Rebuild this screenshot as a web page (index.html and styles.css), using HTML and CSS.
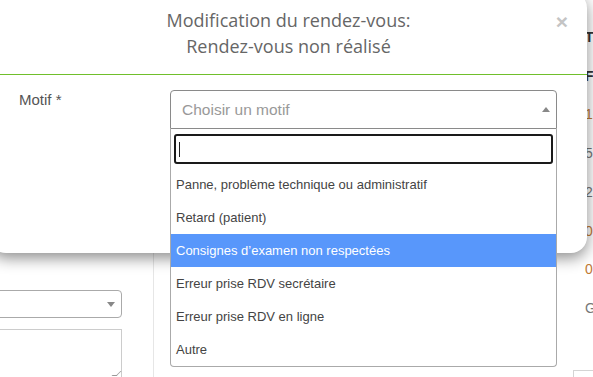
FILE: index.html
```html
<!DOCTYPE HTML>
<html>
<head>
	<title>Modification du rendez-vous</title>
<meta name="viewport" content="width=device-width, initial-scale=1">
<link rel="stylesheet" href="styles.css">
</head>
<body>
<div class="page">
	<div class="page-left">
		<div class="bg-select"><span class="caret-down"></span></div>
		<div class="bg-textarea"><span class="grip"></span></div>
	</div>
	<div class="page-mid"></div>
	<div class="page-right">
		<span class="strong">T</span>
		<span class="strong">F</span>
		<span class="num">1</span>
		<span class="num dim">5</span>
		<span class="num dim">2</span>
		<span class="num">0</span>
		<span class="num">0</span>
		<span class="dim">G</span>
		<span class="mini-box"></span>
	</div>
</div>

<div class="modal">
	<div class="modal-header">
		<span class="close">&times;</span>
		<h4>Modification du rendez-vous:<br>Rendez-vous non réalisé</h4>
	</div>
	<div class="modal-body">
		<label class="label">Motif *</label>
		<div class="field">
			<div class="select open">
				<span class="placeholder">Choisir un motif</span>
				<span class="caret-up"></span>
			</div>
			<div class="dropdown">
				<div class="search"><span class="cursor"></span></div>
				<ul class="options">
					<li>Panne, problème technique ou administratif</li>
					<li>Retard (patient)</li>
					<li class="active">Consignes d’examen non respectées</li>
					<li>Erreur prise RDV secrétaire</li>
					<li>Erreur prise RDV en ligne</li>
					<li>Autre</li>
				</ul>
			</div>
		</div>
	</div>
</div>
</body>
</html>
```

FILE: styles.css
```css
*{ box-sizing:border-box; }
html,body{
	margin:0;
	padding:0;
}
body{
	font-family:"Liberation Sans",Arial,sans-serif;
	background:#fff;
	width:593px;
	height:377px;
	overflow:hidden;
	position:relative;
}

/* page behind the modal */
.page{
	display:grid;
	grid-template-columns:154px 430px 9px;
	height:377px;
}
.page-left{
	border-right:1px solid #e6e6e6;
	padding-top:290px;
}
.bg-select{
	margin-left:-10px;
	width:132px;
	height:28px;
	border:1px solid #aaa;
	border-radius:4px;
	display:flex;
	align-items:center;
	justify-content:flex-end;
	padding-right:6px;
}
.caret-down{
	border-top:5px solid #888;
	border-left:4px solid transparent;
	border-right:4px solid transparent;
}
.bg-textarea{
	margin-left:-10px;
	margin-top:11px;
	width:132px;
	height:60px;
	border:1px solid #ccc;
	display:flex;
	align-items:flex-end;
	justify-content:flex-end;
	padding:0 2px 12px 0;
}
.grip{
	width:5px;
	height:5px;
	border-right:1px solid #999;
	border-bottom:1px solid #999;
	transform:skewX(-45deg);
}
.page-right{
	display:flex;
	flex-direction:column;
	padding-top:18px;
	font-size:14px;
	line-height:38.7px;
	color:#c17a35;
	white-space:nowrap;
	margin-left:1px;
}
.page-right .strong{
	color:#333;
	font-weight:bold;
}
.page-right .dim{ color:#777; }
.mini-box{
	display:block;
	margin:42px 0 0 -12px;
	width:30px;
	height:10px;
	border:1px solid #d4d4d4;
}

/* modal */
.modal{
	position:absolute;
	left:-10px;
	top:-8px;
	width:597px;
	height:261px;
	background:#fff;
	border-radius:16px;
	box-shadow:0 5px 15px rgba(0,0,0,.45);
	z-index:2;
}
.modal-header{
	position:relative;
	padding:15px 40px;
	border-bottom:1px solid #70bf2b;
	text-align:center;
}
.modal-header h4{
	margin:0;
	font-family:"Open Sans",sans-serif;
	font-weight:400;
	font-size:18px;
	line-height:26px;
	color:#666;
}
.close{
	position:absolute;
	right:19px;
	top:19px;
	font-family:"Liberation Sans",Arial,sans-serif;
	font-weight:bold;
	font-size:21px;
	line-height:21px;
	color:#c4c4c4;
}
.modal-body{
	display:grid;
	grid-template-columns:151px 387px;
	padding:15px 30px 0 29px;
}
.label{
	font-size:15px;
	line-height:20px;
	color:#555;
}
.field{ position:relative; }
.select{
	height:39px;
	border:1px solid #8a8a8a;
	border-radius:4px 4px 0 0;
	display:flex;
	align-items:center;
	justify-content:space-between;
	padding:0 6px 0 11px;
}
.placeholder{
	font-size:15.5px;
	color:#999;
}
.caret-up{
	border-bottom:5px solid #888;
	border-left:4px solid transparent;
	border-right:4px solid transparent;
	margin-top:-1px;
}
.dropdown{
	position:absolute;
	top:100%;
	left:0;
	width:387px;
	background:#fff;
	border:1px solid #aaa;
	border-top:0;
	border-radius:0 0 4px 4px;
	padding:5px 3px 0;
}
.search{
	height:30px;
	border:2px solid #1a1a1a;
	border-radius:3px;
	display:flex;
	align-items:center;
	padding-left:3px;
}
.cursor{
	width:1px;
	height:15px;
	background:#222;
}
.options{
	list-style:none;
	margin:4px -3px 0;
	padding:0;
}
.options li{
	height:33px;
	line-height:33px;
	padding-left:5px;
	font-size:13px;
	color:#444;
}
.options li.active{
	background:#5897fb;
	color:#fff;
}
```
